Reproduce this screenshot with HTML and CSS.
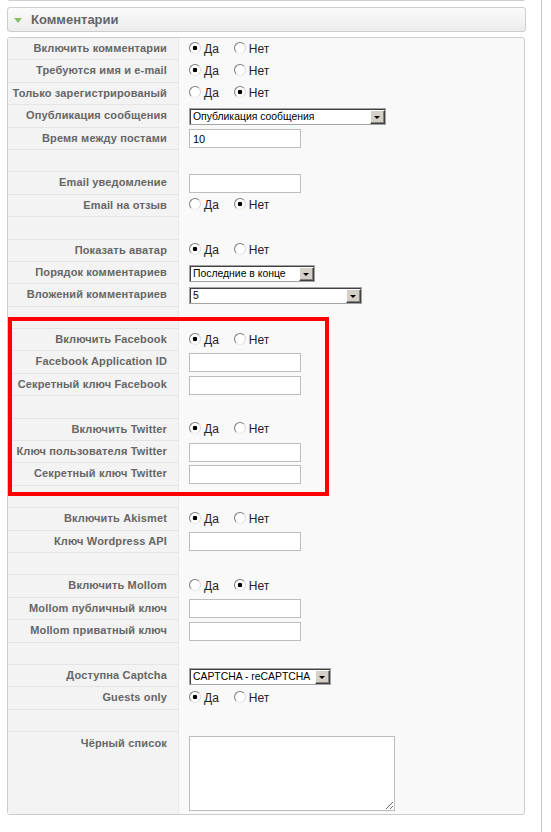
FILE: index.html
```html
<!DOCTYPE html>
<html lang="ru">
<head>
<meta charset="utf-8">
<title>Комментарии</title>
<link rel="stylesheet" href="styles.css">
</head>
<body>
<div class="page">
  <div class="prev"></div>
  <div class="pane-head"><span class="tri"></span>Комментарии</div>
  <div class="pane">
    <div class="row"><div class="key">Включить комментарии</div><div class="val"><label class="opt"><input type="radio" name="r1" checked>Да</label><label class="opt"><input type="radio" name="r1">Нет</label></div></div>
    <div class="row"><div class="key">Требуются имя и e-mail</div><div class="val"><label class="opt"><input type="radio" name="r2" checked>Да</label><label class="opt"><input type="radio" name="r2">Нет</label></div></div>
    <div class="row"><div class="key">Только зарегистрированый</div><div class="val"><label class="opt"><input type="radio" name="r3">Да</label><label class="opt"><input type="radio" name="r3" checked>Нет</label></div></div>
    <div class="row"><div class="key">Опубликация сообщения</div><div class="val"><span class="sel w197"><select><option>Опубликация сообщения</option></select></span></div></div>
    <div class="row"><div class="key">Время между постами</div><div class="val"><input class="txt" type="text" value="10"></div></div>
    <div class="row"><div class="key"></div><div class="val"></div></div>
    <div class="row"><div class="key">Email уведомление</div><div class="val"><input class="txt" type="text"></div></div>
    <div class="row"><div class="key">Email на отзыв</div><div class="val"><label class="opt"><input type="radio" name="r4">Да</label><label class="opt"><input type="radio" name="r4" checked>Нет</label></div></div>
    <div class="row"><div class="key"></div><div class="val"></div></div>
    <div class="row"><div class="key">Показать аватар</div><div class="val"><label class="opt"><input type="radio" name="r5" checked>Да</label><label class="opt"><input type="radio" name="r5">Нет</label></div></div>
    <div class="row"><div class="key">Порядок комментариев</div><div class="val"><span class="sel w126"><select><option>Последние в конце</option></select></span></div></div>
    <div class="row"><div class="key">Вложений комментариев</div><div class="val"><span class="sel w173"><select><option>5</option></select></span></div></div>
    <div class="row"><div class="key"></div><div class="val"></div></div>
    <div class="row"><div class="key">Включить Facebook</div><div class="val"><label class="opt"><input type="radio" name="r6" checked>Да</label><label class="opt"><input type="radio" name="r6">Нет</label></div></div>
    <div class="row"><div class="key">Facebook Application ID</div><div class="val"><input class="txt" type="text"></div></div>
    <div class="row"><div class="key">Секретный ключ Facebook</div><div class="val"><input class="txt" type="text"></div></div>
    <div class="row"><div class="key"></div><div class="val"></div></div>
    <div class="row"><div class="key">Включить Twitter</div><div class="val"><label class="opt"><input type="radio" name="r7" checked>Да</label><label class="opt"><input type="radio" name="r7">Нет</label></div></div>
    <div class="row"><div class="key">Ключ пользователя Twitter</div><div class="val"><input class="txt" type="text"></div></div>
    <div class="row"><div class="key">Секретный ключ Twitter</div><div class="val"><input class="txt" type="text"></div></div>
    <div class="row"><div class="key"></div><div class="val"></div></div>
    <div class="row"><div class="key">Включить Akismet</div><div class="val"><label class="opt"><input type="radio" name="r8" checked>Да</label><label class="opt"><input type="radio" name="r8">Нет</label></div></div>
    <div class="row"><div class="key">Ключ Wordpress API</div><div class="val"><input class="txt" type="text"></div></div>
    <div class="row"><div class="key"></div><div class="val"></div></div>
    <div class="row"><div class="key">Включить Mollom</div><div class="val"><label class="opt"><input type="radio" name="r9">Да</label><label class="opt"><input type="radio" name="r9" checked>Нет</label></div></div>
    <div class="row"><div class="key">Mollom публичный ключ</div><div class="val"><input class="txt" type="text"></div></div>
    <div class="row"><div class="key">Mollom приватный ключ</div><div class="val"><input class="txt" type="text"></div></div>
    <div class="row"><div class="key"></div><div class="val"></div></div>
    <div class="row"><div class="key">Доступна Captcha</div><div class="val"><span class="sel w142"><select><option>CAPTCHA - reCAPTCHA</option></select></span></div></div>
    <div class="row"><div class="key">Guests only</div><div class="val"><label class="opt"><input type="radio" name="r10" checked>Да</label><label class="opt"><input type="radio" name="r10">Нет</label></div></div>
    <div class="row"><div class="key"></div><div class="val"></div></div>
    <div class="row tall"><div class="key">Чёрный список</div><div class="val"><textarea class="area"></textarea></div></div>
    <div class="highlight"></div>
  </div>
</div>
</body>
</html>
```
FILE: styles.css
```css
html, body {
  margin: 0;
  padding: 0;
  background: #fff;
}
body {
  font-family: "Liberation Sans", Arial, sans-serif;
  font-size: 11px;
  color: #333;
}
.page {
  box-sizing: border-box;
  width: 542px;
  min-height: 832px;
  padding-left: 7px;
  border-right: 1px solid #c8c8c8;
  display: flex;
  flex-direction: column;
  align-items: flex-start;
}
.prev {
  box-sizing: border-box;
  width: 519px;
  height: 6px;
  margin-top: -5px;
  border: 1px solid #cfcfcf;
  border-top: 0;
  border-radius: 0 0 3px 3px;
}
.pane-head {
  box-sizing: border-box;
  width: 519px;
  height: 25px;
  margin-top: 6px;
  border: 1px solid #cdcdcd;
  border-radius: 3px;
  background: linear-gradient(#fbfbfb, #ececec);
  display: flex;
  align-items: center;
  padding-left: 6px;
  font-size: 13px;
  font-weight: bold;
  color: #666;
}
.tri {
  width: 0;
  height: 0;
  border-left: 4px solid transparent;
  border-right: 4px solid transparent;
  border-top: 5px solid #86c06a;
  margin-right: 9px;
  margin-top: 1px;
}
.pane {
  position: relative;
  box-sizing: border-box;
  width: 518px;
  margin-top: 5px;
  border: 1px solid #cdcdcd;
  border-radius: 3px;
  background: #f9f9f9;
}
.row {
  display: grid;
  grid-template-columns: 171px 1fr;
  height: 22.4px;
}
.row.tall {
  height: 81.6px;
}
.key {
  box-sizing: border-box;
  background: #f3f3f3;
  border-right: 1px solid #e7e7e7;
  border-bottom: 1px solid #e4e4e4;
  text-align: right;
  padding-right: 11px;
  font-weight: bold;
  color: #666;
  letter-spacing: 0.15px;
  line-height: 21.4px;
  white-space: nowrap;
}
.row.tall .key {
  border-bottom: 0;
  line-height: 22.4px;
}
.val {
  display: flex;
  align-items: center;
  padding-left: 10px;
}
.row.tall .val {
  align-items: flex-start;
}
.opt {
  display: inline-flex;
  align-items: center;
  margin-right: 15px;
  margin-top: -1px;
  font-size: 12px;
  color: #222;
}
.opt input {
  appearance: none;
  -webkit-appearance: none;
  box-sizing: border-box;
  width: 12px;
  height: 12px;
  margin: 0 3px 2px 0;
  border: 1px solid;
  border-color: #7a7a7a #d8d8d8 #e8e8e8 #7a7a7a;
  border-radius: 50%;
  background: #fff;
}
.opt input:checked {
  background: radial-gradient(circle, #000 0, #000 2px, #fff 2.6px);
}
.txt {
  box-sizing: border-box;
  width: 112px;
  height: 19px;
  margin: 0;
  padding: 0 3px;
  border: 1px solid #bdbdbd;
  background: #fff;
  font-family: "Liberation Sans", Arial, sans-serif;
  font-size: 11px;
  color: #000;
}
.sel {
  position: relative;
  display: inline-block;
  height: 17px;
}
.sel select {
  appearance: none;
  -webkit-appearance: none;
  box-sizing: border-box;
  width: 100%;
  height: 17px;
  margin: 0;
  padding: 0 17px 0 3px;
  border: 1px solid #a3a3a3;
  border-radius: 0;
  box-shadow: inset 1px 1px 0 #404040;
  background: #fff;
  font-family: "Liberation Sans", Arial, sans-serif;
  font-size: 10.4px;
  line-height: 15px;
  color: #000;
}
.sel::after {
  content: "";
  position: absolute;
  top: 2px;
  right: 1px;
  width: 15px;
  height: 14px;
  box-sizing: border-box;
  background: #d4d0c8;
  border: 1px solid;
  border-color: #fff #404040 #404040 #fff;
  box-shadow: inset -1px -1px 0 #808080;
}
.sel::before {
  content: "";
  position: absolute;
  z-index: 1;
  top: 8px;
  right: 6px;
  width: 0;
  height: 0;
  border-left: 3px solid transparent;
  border-right: 3px solid transparent;
  border-top: 3px solid #000;
}
.w197 { width: 197px; }
.w126 { width: 126px; }
.w173 { width: 173px; }
.w142 { width: 142px; }
.area {
  box-sizing: border-box;
  width: 206px;
  height: 75px;
  margin: 4px 0 0 0;
  border: 1px solid #bdbdbd;
  background: #fff;
}
.highlight {
  position: absolute;
  left: 0;
  top: 279px;
  width: 321px;
  height: 179px;
  box-sizing: border-box;
  border: 4px solid #ff0000;
  pointer-events: none;
}
```
